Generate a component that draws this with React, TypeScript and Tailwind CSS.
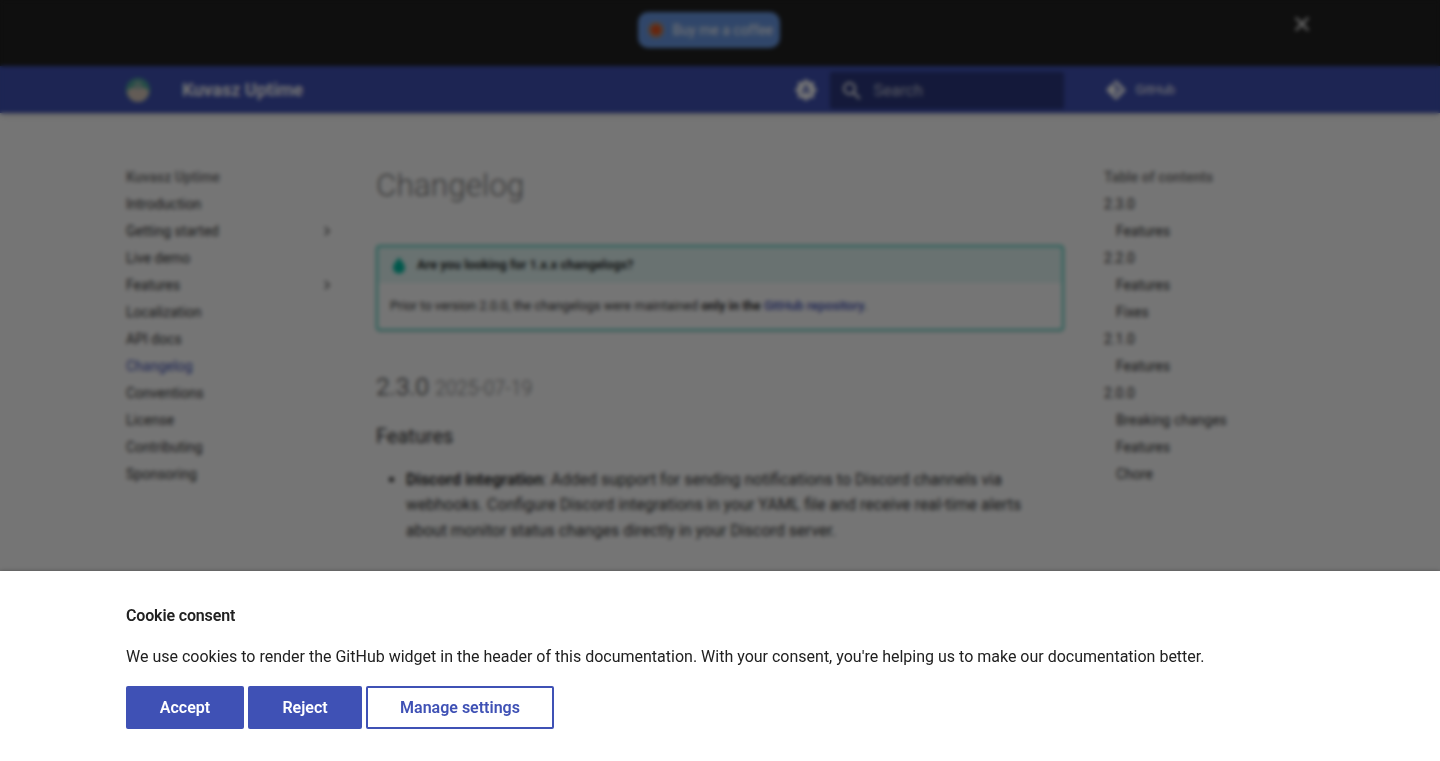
import { FaGitAlt } from "react-icons/fa";
import { MdBrightnessAuto, MdChevronRight, MdClose, MdSearch } from "react-icons/md";

const navItems = [
  { label: "Introduction" },
  { label: "Getting started", more: true },
  { label: "Live demo" },
  { label: "Features", more: true },
  { label: "Localization" },
  { label: "API docs" },
  { label: "Changelog", active: true },
  { label: "Conventions" },
  { label: "License" },
  { label: "Contributing" },
  { label: "Sponsoring" },
];

const tocItems = [
  { label: "2.3.0" },
  { label: "Features", sub: true },
  { label: "2.2.0" },
  { label: "Features", sub: true },
  { label: "Fixes", sub: true },
  { label: "2.1.0" },
  { label: "Features", sub: true },
  { label: "2.0.0" },
  { label: "Breaking changes", sub: true },
  { label: "Features", sub: true },
  { label: "Chore", sub: true },
];

function Logo() {
  return (
    <svg width="24" height="24" viewBox="0 0 24 24" className="shrink-0">
      <circle cx="12" cy="12" r="12" fill="#4fa89a" />
      <path d="M1 13a11 11 0 0 0 22 0c-3-3-6-4-11-4s-8 1-11 4z" fill="#d8c8bc" />
      <circle cx="12" cy="7" r="4" fill="#8fb5ad" />
    </svg>
  );
}

function Banner() {
  return (
    <div className="relative flex h-[66px] justify-center bg-[#212121]">
      <div className="mt-3 mr-[23px] flex h-9 w-[142px] items-center gap-[8px] rounded-[10px] bg-[#6a9ae6] pl-[9px] text-sm text-white">
        <svg width="18" height="18" viewBox="0 0 18 18" className="shrink-0">
          <circle cx="9" cy="9" r="8" fill="#b08a70" />
          <circle cx="9" cy="9" r="5" fill="#e0501f" />
        </svg>
        <span>Buy me a coffee</span>
      </div>
      <MdClose className="absolute top-[12px] left-[1290px] text-white" size={24} />
    </div>
  );
}

function Header() {
  return (
    <header className="bg-[#3f51b5] text-white shadow-md">
      <div className="mx-auto flex h-[47px] w-[1188px] items-center">
        <Logo />
        <span className="ml-8 text-lg font-bold">Kuvasz Uptime</span>
        <MdBrightnessAuto className="ml-auto" size={24} />
        <div className="mt-[2px] ml-3 flex h-[37px] w-[234px] items-center rounded-[2px] bg-black/30 pl-[10px]">
          <MdSearch size={24} />
          <span className="ml-[10px] text-base text-white/70">Search</span>
        </div>
        <FaGitAlt className="ml-[41px]" size={22} />
        <span className="mr-[139px] ml-[9px] text-[12.8px]">GitHub</span>
      </div>
    </header>
  );
}

function Sidebar() {
  return (
    <nav className="w-[210px] shrink-0 text-sm">
      <div className="flex h-[27px] items-center font-bold text-black/50">Kuvasz Uptime</div>
      {navItems.map((item) => (
        <div
          key={item.label}
          className={`flex h-[27px] items-center justify-between ${item.active ? "text-[#3f51b5]" : "text-black/85"}`}
        >
          <span>{item.label}</span>
          {item.more && <MdChevronRight size={18} className="text-black/70" />}
        </div>
      ))}
    </nav>
  );
}

function Toc() {
  return (
    <aside className="ml-10 w-[210px] shrink-0 text-sm">
      <div className="flex h-[27px] items-center font-bold text-black/50">Table of contents</div>
      {tocItems.map((item, i) => (
        <div key={i} className={`flex h-[27px] items-center text-black/85 ${item.sub ? "pl-3" : ""}`}>
          {item.label}
        </div>
      ))}
    </aside>
  );
}

function Content() {
  return (
    <article className="ml-10 w-[688px] shrink-0 text-black/85">
      <h1 className="h-[42px] text-[31.6px] leading-[45px] font-light text-black/55">Changelog</h1>
      <div className="mt-10 h-[86px] rounded border-2 border-[#00bfa5]/70 text-[12.8px] shadow-sm">
        <div className="flex h-[36px] items-center bg-[#00bfa5]/10 pl-[11px] font-bold">
          <svg width="20" height="20" viewBox="0 0 20 20" className="shrink-0 text-[#00bfa5]">
            <path d="M10 2c1 3 6 6 6 11a6 5.500 0 0 1-12 0c0-5 5-8 6-11z" fill="currentColor" />
          </svg>
          <span className="ml-2">Are you looking for 1.x.x changelogs?</span>
        </div>
        <p className="mt-[13px] pl-3">
          Prior to version 2.0.0, the changelogs were maintained <strong>only in the</strong>{" "}
          <strong className="font-medium text-[#3f51b5]">GitHub repository</strong>.
        </p>
      </div>
      <h2 className="mt-[40px] h-[32px] text-[24.8px] leading-[32px] font-light">
        2.3.0 <span className="text-[19.4px] text-black/55">2025-07-19</span>
      </h2>
      <h3 className="mt-[17px] h-8 text-xl leading-8">Features</h3>
      <ul className="mt-[15px] ml-[30px] list-disc text-base leading-[25.4px]">
        <li>
          <strong>Discord integration</strong>: Added support for sending notifications to Discord channels via
          webhooks. Configure Discord integrations in your YAML file and receive real-time alerts about monitor
          status changes directly in your Discord server.
        </li>
      </ul>
    </article>
  );
}

function CookieConsent() {
  return (
    <div className="absolute right-0 bottom-0 left-0 h-[190px] bg-white pt-[35px] pl-[126px] text-[#212121] shadow-[0_0_4px_rgba(0,0,0,0.3)]">
      <div className="text-base leading-5 font-semibold tracking-[-0.15px]">Cookie consent</div>
      <p className="mt-[21px] text-base leading-5">
        We use cookies to render the GitHub widget in the header of this documentation. With your consent, you're
        helping us to make our documentation better.
      </p>
      <div className="mt-[19px] flex gap-1 text-base font-semibold">
        <button className="h-[43px] w-[118px] rounded-[2px] bg-[#3f51b5] text-white">Accept</button>
        <button className="h-[43px] w-[114px] rounded-[2px] bg-[#3f51b5] text-white">Reject</button>
        <button className="h-[43px] w-[188px] rounded-[2px] border-2 border-[#3f51b5] bg-white text-[#3f51b5]">
          Manage settings
        </button>
      </div>
    </div>
  );
}

export default function App() {
  return (
    <div className="relative h-[761px] overflow-hidden bg-white font-['Roboto',sans-serif]">
      <Banner />
      <Header />
      <main className="mx-auto flex w-[1188px] pt-[50px]">
        <Sidebar />
        <Content />
        <Toc />
      </main>
      <div className="absolute inset-0 bg-black/54 backdrop-blur-[2px]" />
      <CookieConsent />
    </div>
  );
}
